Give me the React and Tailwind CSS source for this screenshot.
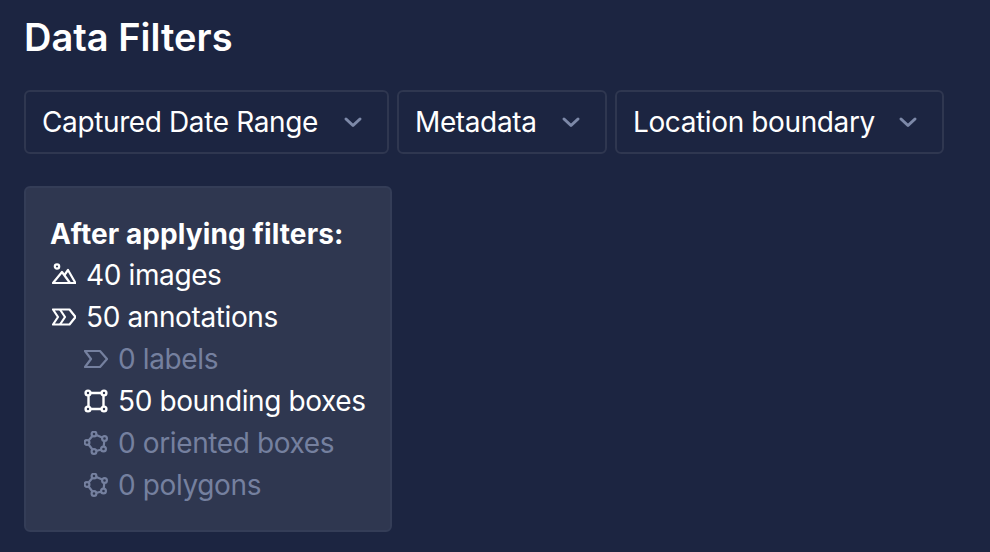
const Chevron = () => (
  <svg width="20" height="20" viewBox="0 0 20 20" fill="none" stroke="#7d89a8" strokeWidth="3" strokeLinecap="round" strokeLinejoin="round" className="shrink-0">
    <path d="M3 7 L10 13.5 L17 7" />
  </svg>
);

const Dropdown = ({ label, w }) => (
  <button className={`flex h-[64px] items-center justify-between rounded-[6px] border-2 border-[#2f3750] bg-transparent pl-[16px] pr-[24px] text-[28px] leading-[42px] tracking-[-0.38px] text-white ${w}`}>
    <span>{label}</span>
    <Chevron />
  </button>
);

const Images = () => (
  <svg width="24" height="24" viewBox="0 0 24 24" fill="none" stroke="currentColor" strokeWidth="2.2" strokeLinejoin="round">
    <circle cx="5" cy="3.5" r="2.2" />
    <path d="M1 20 L10 9 L18 20 Z" />
    <path d="M12.5 12 L16 7 L23.5 20 H1" />
  </svg>
);

const Annotations = () => (
  <svg width="24" height="24" viewBox="0 0 24 24" fill="none" stroke="currentColor" strokeWidth="2.2" strokeLinejoin="round">
    <path d="M1 4.5 H17.5 L23.5 12 L17.5 19.5 H1 L6 12 Z" />
    <path d="M8 4.5 L13 12 L8 19.5" />
  </svg>
);

const Label = () => (
  <svg width="24" height="24" viewBox="0 0 24 24" fill="none" stroke="currentColor" strokeWidth="2.2" strokeLinejoin="round">
    <path d="M1 4 H16 L23 12 L16 20 H1 L7 12 Z" />
  </svg>
);

const Box = () => (
  <svg width="24" height="24" viewBox="0 0 24 24" fill="none" stroke="currentColor" strokeWidth="2.4">
    <path d="M4.5 4 H19.5 V20 H4.5 Z" />
    <circle cx="4" cy="4" r="2.4" fill="#2f3750" />
    <circle cx="20" cy="4" r="2.4" fill="#2f3750" />
    <circle cx="20" cy="20" r="2.4" fill="#2f3750" />
    <circle cx="4" cy="20" r="2.4" fill="#2f3750" />
  </svg>
);

const Poly = () => (
  <svg width="24" height="24" viewBox="0 0 24 24" fill="none" stroke="currentColor" strokeWidth="2.2" strokeLinejoin="round">
    <path d="M10 3 L20.5 7.5 L19.5 18 L10 20.5 L3 11.5 Z" />
    <circle cx="10" cy="3" r="2.4" fill="#2f3750" />
    <circle cx="20.5" cy="7.5" r="2.4" fill="#2f3750" />
    <circle cx="19.5" cy="18" r="2.4" fill="#2f3750" />
    <circle cx="10" cy="20.5" r="2.4" fill="#2f3750" />
    <circle cx="3" cy="11.5" r="2.4" fill="#2f3750" />
  </svg>
);

const Row = ({ icon, text, muted, indent }) => (
  <div className={`flex h-[42px] items-center gap-[10px] ${indent ? "pl-[34px]" : "pl-[2px]"} ${muted ? "text-[#75809f]" : "text-white"}`}>
    <span className="flex h-[24px] w-[24px] shrink-0 items-center justify-center">{icon}</span>
    <span className="whitespace-nowrap tracking-[-0.38px]">{text}</span>
  </div>
);

export default function App() {
  return (
    <div className="h-[552px] w-[990px] overflow-hidden bg-[#1c2541] px-[24px] pt-[13px] font-['Inter',sans-serif] text-white">
      <h1 className="text-[38px] font-semibold leading-[48px]">Data Filters</h1>
      <div className="mt-[29px] flex gap-[8.5px]">
        <Dropdown label="Captured Date Range" w="w-[364.5px]" />
        <Dropdown label="Metadata" w="w-[209.5px]" />
        <Dropdown label="Location boundary" w="w-[328.5px]" />
      </div>
      <div className="mt-[32px] h-[346px] w-[368px] rounded-[6px] border-2 border-[#343d57] bg-[#2f3750] px-[24px] pt-[25px] text-[28px] leading-[42px]">
        <div className="-mb-[1px] font-bold tracking-[0.1px]">After applying filters:</div>
        <Row icon={<Images />} text="40 images" />
        <Row icon={<Annotations />} text="50 annotations" />
        <Row icon={<Label />} text="0 labels" muted indent />
        <Row icon={<Box />} text="50 bounding boxes" indent />
        <Row icon={<Poly />} text="0 oriented boxes" muted indent />
        <Row icon={<Poly />} text="0 polygons" muted indent />
      </div>
    </div>
  );
}
